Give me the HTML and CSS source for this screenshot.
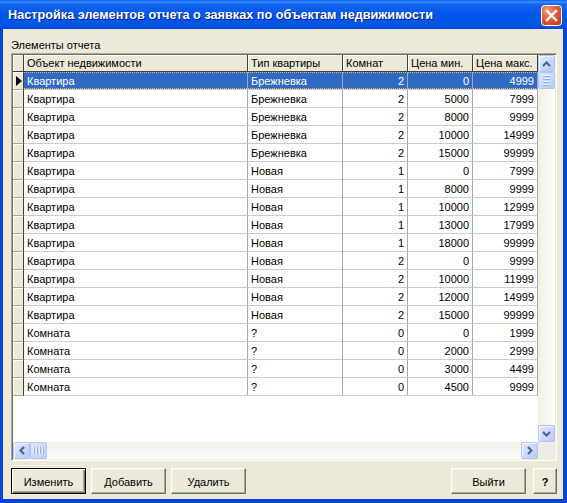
FILE: index.html
```html
<!DOCTYPE html>
<html lang="ru">
<head>
<meta charset="utf-8">
<title>Настройка элементов отчета</title>
<link rel="stylesheet" href="styles.css">
</head>
<body>
<div class="window">
  <div class="titlebar">
    <span class="title">Настройка элементов отчета о заявках по объектам недвижимости</span>
    <span class="close">
      <svg width="21" height="21" viewBox="0 0 21 21">
        <defs>
          <radialGradient id="cg" cx="0.3" cy="0.25" r="0.9">
            <stop offset="0" stop-color="#F4A07E"/>
            <stop offset="0.45" stop-color="#E2603A"/>
            <stop offset="1" stop-color="#C8401C"/>
          </radialGradient>
        </defs>
        <rect x="0.5" y="0.5" width="20" height="20" rx="3" fill="url(#cg)" stroke="#fff"/>
        <path d="M6 6 L15 15 M15 6 L6 15" stroke="#fff" stroke-width="2.4" stroke-linecap="square"/>
      </svg>
    </span>
  </div>
  <div class="client">
    <div class="label">Элементы отчета</div>
    <div class="grid">
      <div class="grid-main">
        <div class="table-wrap">
          <table class="data">
            <colgroup>
              <col class="c-ind"><col class="c-obj"><col class="c-type"><col class="c-num"><col class="c-num"><col class="c-num">
            </colgroup>
            <thead>
              <tr><th class="ind"></th><th>Объект недвижимости</th><th>Тип квартиры</th><th>Комнат</th><th>Цена мин.</th><th>Цена макс.</th></tr>
            </thead>
            <tbody>
              <tr class="sel"><td class="ind"><svg class="arrow" width="6" height="10" viewBox="0 0 6 10"><polygon points="0,0 6,5 0,10" fill="#000"/></svg></td><td>Квартира</td><td>Брежневка</td><td class="n">2</td><td class="n">0</td><td class="n">4999</td></tr>
              <tr><td class="ind"></td><td>Квартира</td><td>Брежневка</td><td class="n">2</td><td class="n">5000</td><td class="n">7999</td></tr>
              <tr><td class="ind"></td><td>Квартира</td><td>Брежневка</td><td class="n">2</td><td class="n">8000</td><td class="n">9999</td></tr>
              <tr><td class="ind"></td><td>Квартира</td><td>Брежневка</td><td class="n">2</td><td class="n">10000</td><td class="n">14999</td></tr>
              <tr><td class="ind"></td><td>Квартира</td><td>Брежневка</td><td class="n">2</td><td class="n">15000</td><td class="n">99999</td></tr>
              <tr><td class="ind"></td><td>Квартира</td><td>Новая</td><td class="n">1</td><td class="n">0</td><td class="n">7999</td></tr>
              <tr><td class="ind"></td><td>Квартира</td><td>Новая</td><td class="n">1</td><td class="n">8000</td><td class="n">9999</td></tr>
              <tr><td class="ind"></td><td>Квартира</td><td>Новая</td><td class="n">1</td><td class="n">10000</td><td class="n">12999</td></tr>
              <tr><td class="ind"></td><td>Квартира</td><td>Новая</td><td class="n">1</td><td class="n">13000</td><td class="n">17999</td></tr>
              <tr><td class="ind"></td><td>Квартира</td><td>Новая</td><td class="n">1</td><td class="n">18000</td><td class="n">99999</td></tr>
              <tr><td class="ind"></td><td>Квартира</td><td>Новая</td><td class="n">2</td><td class="n">0</td><td class="n">9999</td></tr>
              <tr><td class="ind"></td><td>Квартира</td><td>Новая</td><td class="n">2</td><td class="n">10000</td><td class="n">11999</td></tr>
              <tr><td class="ind"></td><td>Квартира</td><td>Новая</td><td class="n">2</td><td class="n">12000</td><td class="n">14999</td></tr>
              <tr><td class="ind"></td><td>Квартира</td><td>Новая</td><td class="n">2</td><td class="n">15000</td><td class="n">99999</td></tr>
              <tr><td class="ind"></td><td>Комната</td><td>?</td><td class="n">0</td><td class="n">0</td><td class="n">1999</td></tr>
              <tr><td class="ind"></td><td>Комната</td><td>?</td><td class="n">0</td><td class="n">2000</td><td class="n">2999</td></tr>
              <tr><td class="ind"></td><td>Комната</td><td>?</td><td class="n">0</td><td class="n">3000</td><td class="n">4499</td></tr>
              <tr><td class="ind"></td><td>Комната</td><td>?</td><td class="n">0</td><td class="n">4500</td><td class="n">9999</td></tr>
            </tbody>
          </table>
        </div>
        <div class="vscroll">
          <div class="sbtn"><svg width="9" height="6" viewBox="0 0 9 6"><polyline points="1,5 4.5,1.5 8,5" fill="none" stroke="#4D6185" stroke-width="2"/></svg></div>
          <div class="thumb vthumb"><span></span><span></span><span></span><span></span></div>
          <div class="vtrack"></div>
          <div class="sbtn"><svg width="9" height="6" viewBox="0 0 9 6"><polyline points="1,1 4.5,4.5 8,1" fill="none" stroke="#4D6185" stroke-width="2"/></svg></div>
        </div>
      </div>
      <div class="hbar">
        <div class="hscroll">
          <div class="sbtn"><svg width="6" height="9" viewBox="0 0 6 9"><polyline points="5,1 1.5,4.5 5,8" fill="none" stroke="#4D6185" stroke-width="2"/></svg></div>
          <div class="thumb hthumb"><span></span><span></span><span></span><span></span></div>
          <div class="htrack"></div>
          <div class="sbtn"><svg width="6" height="9" viewBox="0 0 6 9"><polyline points="1,1 4.5,4.5 1,8" fill="none" stroke="#4D6185" stroke-width="2"/></svg></div>
        </div>
        <div class="corner"></div>
      </div>
    </div>
    <div class="buttons">
      <button class="btn default">Изменить</button>
      <button class="btn">Добавить</button>
      <button class="btn">Удалить</button>
      <span class="spacer"></span>
      <button class="btn">Выйти</button>
      <button class="btn help">?</button>
    </div>
  </div>
</div>
</body>
</html>
```
FILE: styles.css
```css
* { box-sizing: border-box; }
html, body { margin: 0; padding: 0; }
body {
  background: #ffffff;
  font-family: "Liberation Sans", Arial, sans-serif;
  font-size: 11px;
  color: #000;
}
.window {
  width: 567px;
  height: 503px;
  display: flex;
  flex-direction: column;
}
.titlebar {
  height: 29px;
  flex: none;
  display: flex;
  align-items: center;
  padding: 0 5px 0 8px;
  background: linear-gradient(to bottom, #0A5FF3 0%, #3D8BFF 7%, #1466F0 14%, #0258EA 45%, #0155E6 85%, #0048D8 100%);
}
.title {
  flex: 1;
  color: #fff;
  font-family: "Liberation Sans", Arial, sans-serif;
  font-weight: bold;
  font-size: 12.7px;
  padding-top: 1px;
  text-shadow: 1px 1px #0A1E8C;
  white-space: nowrap;
  overflow: hidden;
}
.close { width: 21px; height: 21px; display: block; margin-top: 1px; }
.close svg { display: block; }
.client {
  flex: 1;
  background: #ECE9D8;
  border-style: solid;
  border-color: #0842D6;
  border-width: 0 4px 4px 3px;
  padding: 8px 6px 5px 8px;
  display: flex;
  flex-direction: column;
}
.label { height: 16px; line-height: 16px; flex: none; }
.grid {
  height: 408px;
  flex: none;
  border: 1px solid;
  border-color: #ACA899 #FFFFFF #FFFFFF #ACA899;
  box-shadow: inset 1px 1px #716F64, inset -1px -1px #F1EFE2;
  padding: 1px;
  display: flex;
  flex-direction: column;
}
.grid-main { display: flex; height: 387px; flex: none; }
.table-wrap { width: 525px; height: 387px; background: #fff; overflow: hidden; }
.data {
  border-collapse: separate;
  border-spacing: 0;
  table-layout: fixed;
  width: 525px;
}
.c-ind { width: 11px; }
.c-obj { width: 224px; }
.c-type { width: 95px; }
.c-num { width: 65px; }
.data th, .data td {
  padding: 0 3px;
  white-space: nowrap;
  overflow: hidden;
  font-weight: normal;
  text-align: left;
}
.data th {
  height: 17px;
  line-height: 16px;
  background: #ECE9D8;
  border-right: 1px solid #404040;
  border-bottom: 1px solid #404040;
  box-shadow: inset 1px 1px #fff;
}
.data td {
  height: 18px;
  padding-top: 2px;
  line-height: 15px;
  border-right: 1px solid #A8A8A8;
  border-bottom: 1px solid #CCCCCC;
}
.data td.n { text-align: right; }
.data td.ind, .data th.ind {
  padding: 0;
  background: #ECE9D8;
  border-right: 1px solid #404040;
  border-bottom: 1px solid #ACA899;
  box-shadow: inset 1px 1px #fff;
}
.data th.ind { border-bottom-color: #404040; }
.arrow { display: block; margin: 0 0 0 3px; }
.data tr.sel td:not(.ind) {
  background-color: #316AC5;
  color: #fff;
  background-image:
    repeating-linear-gradient(to right, #E8B860 0 1px, transparent 1px 2px),
    repeating-linear-gradient(to right, #E8B860 0 1px, transparent 1px 2px);
  background-size: 100% 1px, 100% 1px;
  background-repeat: no-repeat;
  background-position: top left, bottom left;
}
.vscroll { width: 17px; display: flex; flex-direction: column; }
.sbtn {
  width: 17px;
  height: 17px;
  flex: none;
  border: 1px solid #B3C6EF;
  border-radius: 2px;
  background: linear-gradient(135deg, #E4ECFE 0%, #CAD9FC 50%, #B6CAF6 100%);
  box-shadow: inset 1px 1px rgba(255,255,255,0.7);
  display: flex;
  align-items: center;
  justify-content: center;
}
.sbtn svg { display: block; }
.thumb {
  flex: none;
  border: 1px solid #B3C6EF;
  border-radius: 2px;
  background: linear-gradient(135deg, #DDE7FE 0%, #C8D8FC 60%, #BACDF7 100%);
  display: flex;
  align-items: center;
  justify-content: center;
  gap: 1px;
}
.vthumb { width: 17px; height: 17px; flex-direction: column; }
.vthumb span { display: block; width: 7px; height: 1px; background: #EEF4FE; box-shadow: 0 1px #8CB0F8; margin-bottom: 1px; }
.hthumb { width: 17px; height: 17px; flex-direction: row; }
.hthumb span { display: block; width: 1px; height: 7px; background: #EEF4FE; box-shadow: 1px 0 #8CB0F8; margin-right: 1px; }
.vtrack { flex: 1; background: linear-gradient(to right, #F1EFE6, #FEFEFB); }
.hbar { display: flex; height: 17px; flex: none; }
.hscroll { width: 525px; display: flex; }
.htrack { flex: 1; background: linear-gradient(to bottom, #F1EFE6, #FEFEFB); }
.corner { width: 17px; background: #EEEDE5; }
.buttons {
  display: flex;
  margin-top: 7px;
  height: 26px;
  flex: none;
}
.btn {
  width: 75px;
  height: 26px;
  margin: 0 5px 0 0;
  padding: 1px 0 0 0;
  font-family: "Liberation Sans", Arial, sans-serif;
  font-size: 11px;
  color: #000;
  background: #ECE9D8;
  border: 1px solid;
  border-color: #FFFFFF #716F64 #716F64 #FFFFFF;
  box-shadow: inset -1px -1px #ACA899, inset 1px 1px #F1EFE2;
  border-radius: 0;
}
.btn.default {
  border: 1px solid #000;
  box-shadow: inset 1px 1px #fff, inset -1px -1px #716F64, inset -2px -2px #ACA899;
}
.spacer { flex: 1; }
.btn.help { width: 24px; margin: 0 0 0 2px; font-weight: bold; }
```
